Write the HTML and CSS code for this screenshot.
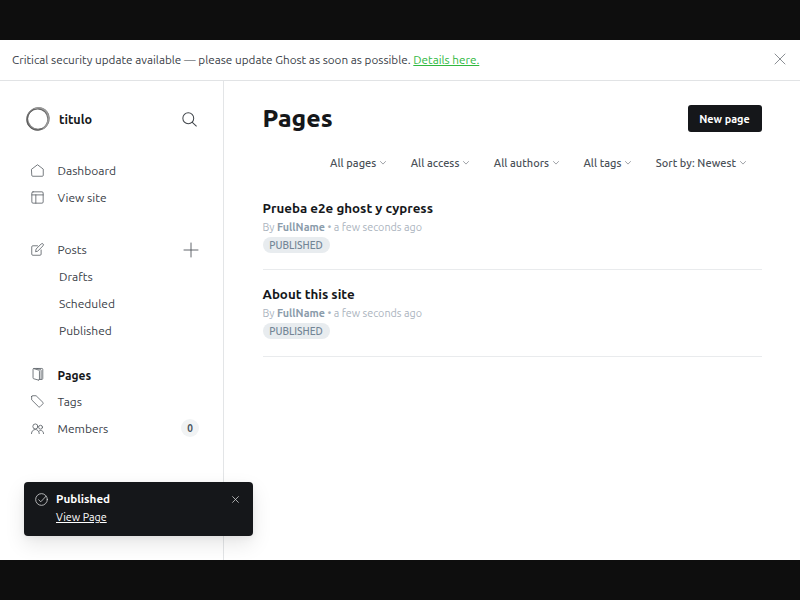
FILE: index.html
```html
<!DOCTYPE html>
<html lang="en">
<head>
<meta charset="utf-8">
<title>Pages - titulo</title>
<link rel="stylesheet" href="styles.css">
</head>
<body>
<div class="window">
  <div class="alert">
    <p>Critical security update available — please update Ghost as soon as possible. <a class="alert-link" href="#">Details here.</a></p>
    <svg class="alert-close" viewBox="0 0 10 10"><path d="M0 0 10 10M10 0 0 10"/></svg>
  </div>
  <div class="body">
    <nav class="sidebar">
      <header class="site">
        <svg class="logo" viewBox="0 0 26 26"><circle cx="12.6" cy="13.3" r="10.6" stroke="#666" stroke-width="1.6"/><ellipse cx="13.4" cy="12.600" rx="10.8" ry="10.8" stroke="#888" stroke-width="1.1"/><ellipse cx="13" cy="13" rx="11.4" ry="10.4" transform="rotate(-50 13 13)" stroke="#555" stroke-width=".7"/><path d="M22 6.500C24.500 11 24 18 18.500 22.500M10 2.500C15 .5 20 3 22 6.500" stroke="#999" stroke-width="1.600"/></svg>
        <span class="site-name">titulo</span>
        <svg class="search" viewBox="0 0 16 16"><circle cx="6.700" cy="6.700" r="5.800"/><path d="m11 11 4.300 4"/></svg>
      </header>
      <ul class="nav main">
        <li><svg class="icon" viewBox="0 0 14 14"><path d="M.8 5.500 7 .8l6.200 4.700v6.700a1 1 0 0 1-1 1H1.800a1 1 0 0 1-1-1Z"/></svg><span>Dashboard</span></li>
        <li><svg class="icon" viewBox="0 0 14 14"><rect x=".9" y=".9" width="12.200" height="12.200" rx="1.300"/><path d="M.9 4.200h12.200M5.200 4.200v8.900"/></svg><span>View site</span></li>
      </ul>
      <ul class="nav posts">
        <li><svg class="icon" viewBox="0 0 14 14"><path d="M7 3H2a1.200 1.200 0 0 0-1.200 1.200V12A1.200 1.200 0 0 0 2 13.200h7.700a1.200 1.200 0 0 0 1.200-1.200V7.500M5 9l.5-2.500 5.500-5.500a1.300 1.300 0 0 1 2 2L7.500 8.500Z"/></svg><span>Posts</span><svg class="plus" viewBox="0 0 14 14"><path d="M7 0v14M0 7h14"/></svg></li>
        <li class="sub"><span>Drafts</span></li>
        <li class="sub"><span>Scheduled</span></li>
        <li class="sub"><span>Published</span></li>
      </ul>
      <ul class="nav content">
        <li class="active"><svg class="icon" viewBox="0 0 14 14"><path d="M8 13 3 11.600a1 1 0 0 1-.8-1V1.500a1 1 0 0 1 1-1h8.500a1 1 0 0 1 1 1v9.800a1 1 0 0 1-1 1H9.200M3 .7l5.200 1.500a1.200 1.200 0 0 1 .9 1.200v8.700c0 .8-.5 1.100-1.100.9M6.500.6l3.500.9c.6.200.9.600.9 1.200v9.500"/></svg><span>Pages</span></li>
        <li><svg class="icon" viewBox="0 0 14 14"><path d="M.7 1.500v3.700L8.200 12.700a1 1 0 0 0 1.400 0l3.300-3.300a1 1 0 0 0 0-1.400L5.500.8H1.400a.7.7 0 0 0-.7.700Z"/></svg><span>Tags</span></li>
        <li><svg class="icon" viewBox="0 0 14 14"><circle cx="4.700" cy="4.800" r="2.700"/><circle cx="10.300" cy="5.600" r="2.100"/><path d="M.5 12.500c0-6 8.400-6 8.400 0M9 9.500c2-1.200 4.500 0 4.500 3"/></svg><span>Members</span><b class="count">0</b></li>
      </ul>
    </nav>
    <main class="content-area">
      <header class="page-head">
        <h1>Pages</h1>
        <button class="new">New page</button>
      </header>
      <div class="filters">
        <span class="filter">All pages<svg class="chev" viewBox="0 0 6 4"><path d="m.5.500 2.500 2.600L5.500.5"/></svg></span>
        <span class="filter">All access<svg class="chev" viewBox="0 0 6 4"><path d="m.5.500 2.500 2.600L5.500.5"/></svg></span>
        <span class="filter">All authors<svg class="chev" viewBox="0 0 6 4"><path d="m.5.500 2.500 2.600L5.500.5"/></svg></span>
        <span class="filter">All tags<svg class="chev" viewBox="0 0 6 4"><path d="m.5.500 2.500 2.600L5.500.5"/></svg></span>
        <span class="filter">Sort by: Newest<svg class="chev" viewBox="0 0 6 4"><path d="m.5.500 2.500 2.600L5.500.5"/></svg></span>
      </div>
      <article class="entry">
        <h2>Prueba e2e ghost y cypress</h2>
        <p class="meta">By <b>FullName</b> • a few seconds ago</p>
        <span class="badge">PUBLISHED</span>
      </article>
      <article class="entry">
        <h2>About this site</h2>
        <p class="meta">By <b>FullName</b> • a few seconds ago</p>
        <span class="badge">PUBLISHED</span>
      </article>
    </main>
  </div>
  <aside class="toast">
    <svg class="check" viewBox="0 0 14 14"><circle cx="7" cy="7" r="6.300"/><path d="m4 7.300 2.200 2.200L12 3.400"/></svg>
    <div class="toast-text"><strong>Published</strong><a href="#">View Page</a></div>
    <svg class="toast-close" viewBox="0 0 8 8"><path d="m.7.700 6.600 6.600M7.300.7.700 7.300"/></svg>
  </aside>
</div>
</body>
</html>
```
FILE: styles.css
```css
* { box-sizing: border-box; }
body {
  margin: 0;
  height: 600px;
  padding: 40px 0;
  overflow: hidden;
  background: #0e0e0e;
  font-family: Ubuntu, "Noto Sans", "Open Sans", sans-serif;
  font-size: 12px;
  color: #394047;
}
svg { display: block; flex: none; fill: none; stroke: #5b6168; stroke-width: .9; stroke-linecap: round; stroke-linejoin: round; overflow: visible; }
h1, h2, p, ul { margin: 0; padding: 0; }
ul { list-style: none; }
span, a, strong, h2, .meta { white-space: nowrap; }
.window { position: relative; height: 520px; overflow: hidden; background: #fff; display: flex; flex-direction: column; }
.alert { height: 41px; flex: none; display: flex; align-items: center; justify-content: space-between; padding: 0 15px 1px 12px; border-bottom: 1px solid #e1e3e5; font-size: 11.730px; }
.alert-link { color: #30b93f; }
.alert-close { width: 10px; height: 10px; margin-top: -1px; stroke: #6d7278; stroke-width: .8; }
.body { flex: 1; display: flex; }
.sidebar { width: 224px; border-right: 1px solid #e3e5e7; flex: none; }
.site { display: flex; align-items: center; height: 26px; margin: 25px 25px 0; }
.logo { width: 26px; height: 26px; }
.site-name { margin: -1px 0 0 8px; font-size: 12.600px; font-weight: 700; color: #15171a; }
.search { width: 15px; height: 15px; margin-left: auto; margin-right: 1px; stroke: #40454b; stroke-width: 1.1; }
.nav { padding: 0 24px 0 31px; }
.nav li { height: 26.750px; display: flex; align-items: center; }
.nav .icon { width: 13px; height: 13px; margin-right: 13.500px; }
.nav .sub { padding-left: 28px; }
.main { margin-top: 25px; }
.posts { margin-top: 26px; }
.content { margin-top: 18px; }
.active { font-weight: 700; color: #15171a; }
.active span { padding-top: 1px; }
.plus { width: 14px; height: 14px; margin-left: auto; margin-right: 1px; stroke: #50565c; }
.count { margin-left: auto; width: 18px; height: 18px; border-radius: 9px; background: #f1f3f4; display: grid; place-items: center; font-size: 10px; font-weight: 600; color: #4a5560; }
.content-area { flex: 1; padding: 24px 38.500px 0 38.500px; }
.page-head { display: flex; justify-content: space-between; height: 27px; align-items: center; }
h1 { font-size: 24.700px; font-weight: 800; line-height: 26px; margin-top: -2px; color: #15171a; }
.new { width: 74px; height: 27px; padding: 0; border: 0; border-radius: 3px; background: #15171a; color: #fff; font: 600 10.900px Ubuntu, "Noto Sans", sans-serif; }
.filters { display: flex; justify-content: flex-end; gap: 24.300px; padding-right: 15.500px; height: 16px; margin-top: 23px; font-size: 11px; font-weight: 500; letter-spacing: .045px; color: #4a5057; }
.filter { display: flex; align-items: center; gap: 4px; }
.chev { width: 6px; height: 4px; stroke: #95999e; }
.entry { height: 87px; border-bottom: 1px solid #e9ebed; padding-top: 15.500px; }
.filters + .entry { margin-top: 12px; padding-top: 16.500px; }
h2 { font-size: 13.350px; line-height: 18px; color: #15171a; }
.meta { font-size: 10.750px; line-height: 14px; margin-top: 2px; color: #abb4be; }
.meta b { font-weight: 600; color: #8b9cab; }
.badge { display: flex; align-items: center; justify-content: center; width: 67px; height: 16px; margin-top: 3.500px; border-radius: 8px; background: #e8ecef; color: #738596; font-size: 10.100px; font-weight: 500; }
.toast { position: absolute; left: 24px; bottom: 24px; width: 229px; height: 54px; border-radius: 4px; background: #15171a; color: #fff; padding: 9px 14px 0 11px; display: flex; box-shadow: 0 8px 20px rgba(0,0,0,.1), 0 2px 6px rgba(0,0,0,.05); }
.check { width: 13px; height: 13px; margin-top: 2px; stroke: #d0d1d2; }
.toast-text { display: flex; flex-direction: column; align-items: flex-start; margin-left: 8px; line-height: 16px; font-size: 11.700px; }
.toast-text a { color: #fff; font-size: 10.800px; margin-top: 2px; }
.toast-close { width: 7px; height: 7px; margin: 5px 0 0 auto; stroke: #d0d1d2; }
```
